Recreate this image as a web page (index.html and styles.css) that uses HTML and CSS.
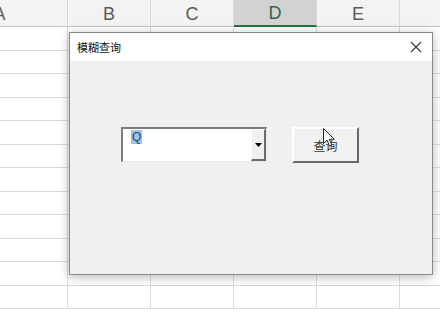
FILE: index.html
```html
<!DOCTYPE html>
<html lang="zh">
<head>
<meta charset="utf-8">
<title>模糊查询</title>
<link rel="stylesheet" href="styles.css">
</head>
<body>
<div class="sheet">
  <div class="hd">A</div><div class="hd">B</div><div class="hd">C</div><div class="hd sel">D</div><div class="hd">E</div><div class="hd"></div>
  <div class="c"></div><div class="c"></div><div class="c"></div><div class="c"></div><div class="c"></div><div class="c"></div>
  <div class="c"></div><div class="c"></div><div class="c"></div><div class="c"></div><div class="c"></div><div class="c"></div>
  <div class="c"></div><div class="c"></div><div class="c"></div><div class="c"></div><div class="c"></div><div class="c"></div>
  <div class="c"></div><div class="c"></div><div class="c"></div><div class="c"></div><div class="c"></div><div class="c"></div>
  <div class="c"></div><div class="c"></div><div class="c"></div><div class="c"></div><div class="c"></div><div class="c"></div>
  <div class="c"></div><div class="c"></div><div class="c"></div><div class="c"></div><div class="c"></div><div class="c"></div>
  <div class="c"></div><div class="c"></div><div class="c"></div><div class="c"></div><div class="c"></div><div class="c"></div>
  <div class="c"></div><div class="c"></div><div class="c"></div><div class="c"></div><div class="c"></div><div class="c"></div>
  <div class="c"></div><div class="c"></div><div class="c"></div><div class="c"></div><div class="c"></div><div class="c"></div>
  <div class="c"></div><div class="c"></div><div class="c"></div><div class="c"></div><div class="c"></div><div class="c"></div>
  <div class="c"></div><div class="c"></div><div class="c"></div><div class="c"></div><div class="c"></div><div class="c"></div>
  <div class="c"></div><div class="c"></div><div class="c"></div><div class="c"></div><div class="c"></div><div class="c"></div>
</div>

<div class="dialog">
  <div class="titlebar">
    <span class="title">模糊查询</span>
    <svg class="close" width="12" height="12" viewBox="0 0 12 12"><path d="M1 1L11 11M11 1L1 11" stroke="#333" stroke-width="1.1" fill="none"/></svg>
  </div>
  <div class="body">
    <div class="combo">
      <div class="field"><span class="hl">Q</span></div>
      <div class="drop"><svg width="7" height="4" viewBox="0 0 7 4"><path d="M0 0H7L3.5 4Z" fill="#000"/></svg></div>
    </div>
    <div class="btn">查询</div>
  </div>
</div>

<svg class="cursor" width="13" height="19" viewBox="0 0 13 19"><path d="M0.5 0.5V15.5L4 12.2L6.6 18L8.8 17L6.3 11.3H11.3Z" fill="#fff" stroke="#222" stroke-width="1"/></svg>
</body>
</html>
```

FILE: styles.css
```css
html, body {
  margin: 0;
  padding: 0;
  width: 440px;
  height: 330px;
  overflow: hidden;
  background: #fff;
  font-family: "Noto Sans CJK SC", "Noto Sans", sans-serif;
}

.sheet {
  display: grid;
  grid-template-columns: 136px repeat(5, 83px);
  grid-template-rows: 27px repeat(13, 23.5px);
  margin-left: -68px;
}

.hd {
  box-sizing: border-box;
  background: #f3f3f3;
  border-right: 1px solid #d9d9d9;
  border-bottom: 1px solid #c4c4c4;
  display: flex;
  align-items: center;
  justify-content: center;
  font-family: "Liberation Sans", "Open Sans", sans-serif;
  font-size: 18px;
  color: #5a5a5a;
  padding-top: 2px;
}

.hd.sel {
  background: #d2d2d2;
  color: #2e6b47;
  border-bottom: 2px solid #217346;
}

.c {
  box-sizing: border-box;
  border-right: 1px solid #dadada;
  border-bottom: 1px solid #dadada;
}

.dialog {
  position: absolute;
  left: 69px;
  top: 32px;
  width: 364px;
  height: 243px;
  box-sizing: border-box;
  border: 1px solid #8a8a8a;
  background: #f0f0f0;
  box-shadow: 0 2px 10px rgba(0, 0, 0, 0.28);
  display: flex;
  flex-direction: column;
}

.titlebar {
  height: 28px;
  background: #fff;
  display: flex;
  align-items: center;
  justify-content: space-between;
  padding: 0 10px 0 7px;
  flex-shrink: 0;
}

.title {
  font-size: 11px;
  color: #111;
}

.close {
  display: block;
}

.body {
  display: flex;
  align-items: flex-start;
  padding: 66px 0 0 51px;
  gap: 25px;
}

.combo {
  width: 146px;
  height: 35px;
  box-sizing: border-box;
  border-top: 2px solid #7c7c7c;
  border-left: 2px solid #7c7c7c;
  border-right: 1px solid #e6e6e6;
  border-bottom: 1px solid #e6e6e6;
  background: #fff;
  display: flex;
}

.field {
  flex: 1;
  padding: 2px 0 0 8px;
  font-family: "Liberation Sans", sans-serif;
  font-size: 12px;
  line-height: 13px;
}

.hl {
  background: #9cc3e8;
  color: #1d3f75;
  padding: 0 1px;
}

.drop {
  width: 15px;
  box-sizing: border-box;
  background: #f0f0f0;
  border-left: 1px solid #fff;
  border-top: 1px solid #fff;
  border-right: 2px solid #6a6a6a;
  border-bottom: 2px solid #6a6a6a;
  display: flex;
  align-items: center;
  justify-content: center;
  padding-top: 1px;
}

.drop svg {
  display: block;
}

.btn {
  width: 67px;
  height: 36px;
  box-sizing: border-box;
  background: #f1f1f1;
  border-top: 2px solid #fff;
  border-left: 2px solid #fff;
  border-right: 2px solid #696969;
  border-bottom: 2px solid #696969;
  display: flex;
  align-items: center;
  justify-content: center;
  font-size: 12px;
  color: #333;
}

.cursor {
  position: absolute;
  left: 323px;
  top: 128px;
}
```
